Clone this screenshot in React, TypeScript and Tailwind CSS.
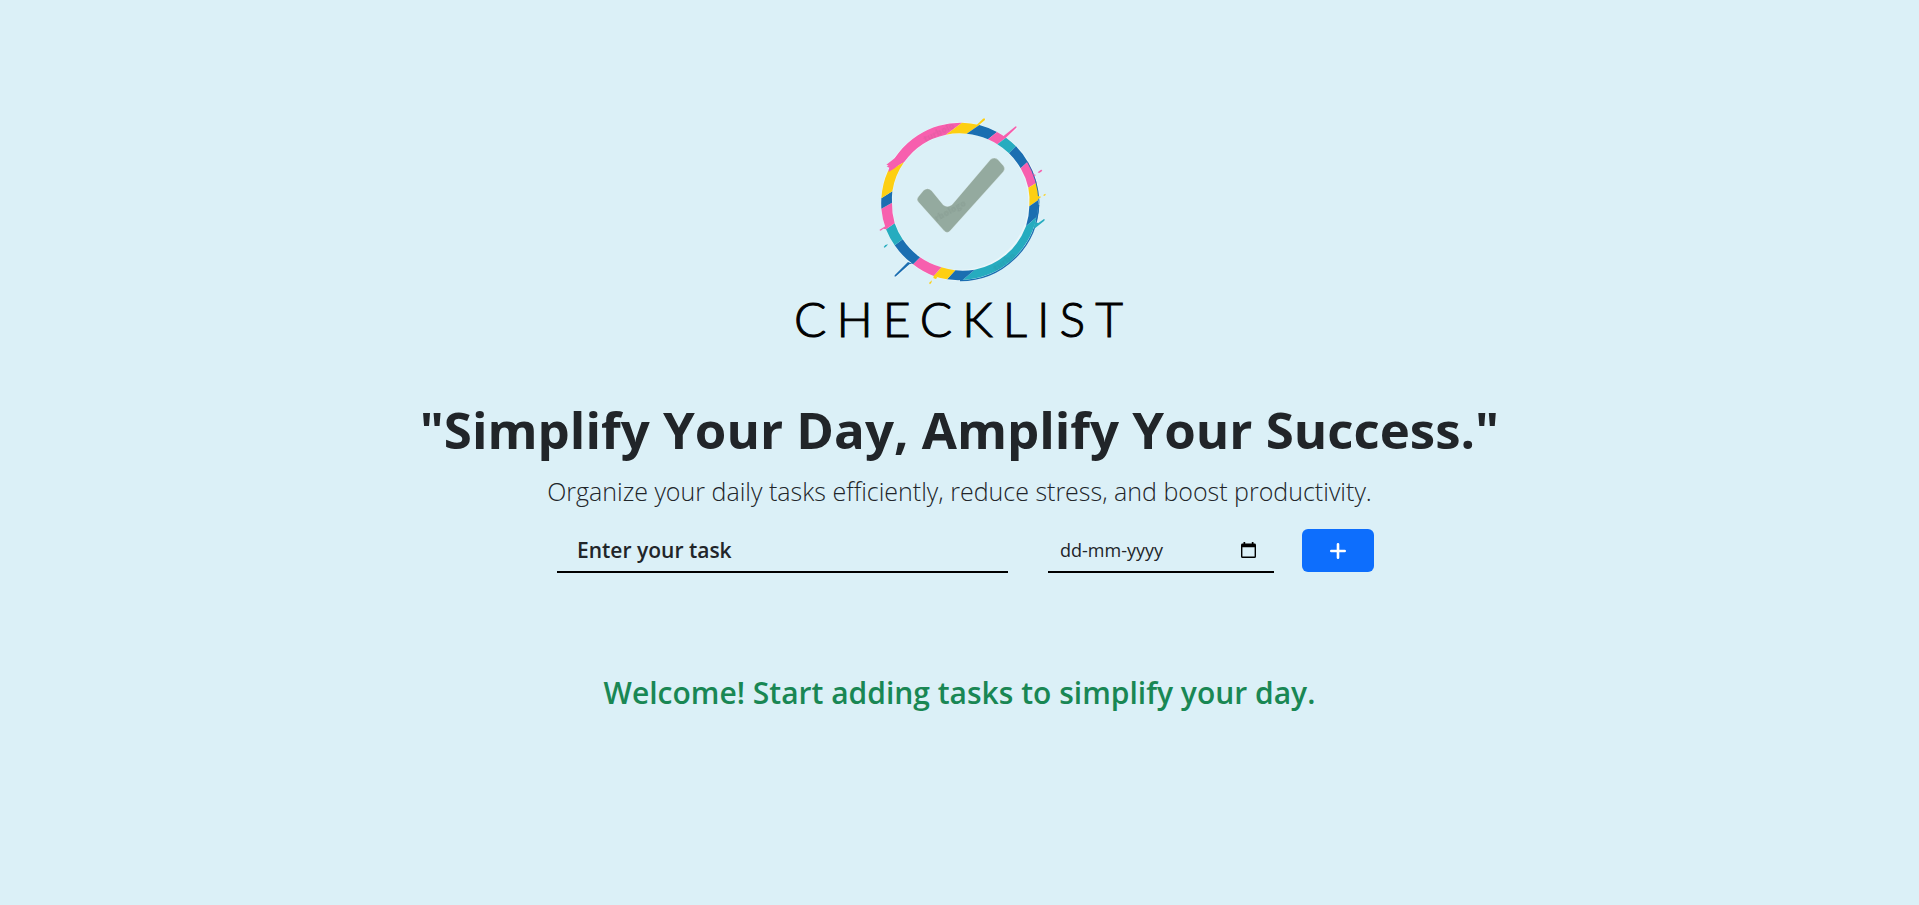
import { useState } from "react";

type Point = [number, number];
type Band = { color: string; outer: Point; inner: Point };

const PINK = "#f75fae";
const YELLOW = "#fdcf12";
const BLUE = "#1b6eb1";
const TEAL = "#26acbf";
const HALO = "#e9f6fa";

// Each band starts at its own edge and runs clockwise to the next band's edge.
const bands: Band[] = [
  { color: PINK, outer: [84, 198], inner: [132, 172] },
  { color: YELLOW, outer: [306, 53], inner: [258, 89] },
  { color: BLUE, outer: [358, 60], inner: [320, 86] },
  { color: PINK, outer: [411, 81], inner: [384, 103] },
  { color: TEAL, outer: [438, 98], inner: [412, 118] },
  { color: BLUE, outer: [468, 124], inner: [447, 145] },
  { color: PINK, outer: [503, 170], inner: [482, 190] },
  { color: YELLOW, outer: [530, 233], inner: [505, 248] },
  { color: BLUE, outer: [535, 285], inner: [508, 304] },
  { color: TEAL, outer: [530, 336], inner: [498, 364] },
  { color: BLUE, outer: [308, 525], inner: [344, 494] },
  { color: YELLOW, outer: [261, 523], inner: [286, 496] },
  { color: PINK, outer: [221, 513], inner: [244, 487] },
  { color: BLUE, outer: [159, 478], inner: [180, 457] },
  { color: TEAL, outer: [104, 421], inner: [128, 403] },
  { color: PINK, outer: [78, 373], inner: [104, 355] },
  { color: BLUE, outer: [64, 311], inner: [96, 293] },
  { color: YELLOW, outer: [64, 280], inner: [97, 259] },
];

const bandPath = (from: Band, to: Band) =>
  `M${from.outer} A237 237 0 0 1 ${to.outer} L${to.inner} A205 205 0 0 0 ${from.inner} Z`;

function Logo() {
  return (
    <svg viewBox="0 0 600 570" className="w-[200px]" aria-hidden="true">
      <circle cx="301" cy="290" r="221" fill="none" stroke={HALO} strokeWidth="34" />
      <path d="M536 300 A237 237 0 0 1 300 527" fill="none" stroke={BLUE} strokeWidth="4" />
      {bands.map((band, i) => (
        <path key={i} d={bandPath(band, bands[(i + 1) % bands.length])} fill={band.color} />
      ))}
      <path d="M86 201 L89 189 L80 184 L86 181 L79 179 L108 157 L130 128 L140 160 L104 190 Z" fill={PINK} />
      <path d="M502 170 Q534 225 537 290 Q535 325 529 345" fill="none" stroke={BLUE} strokeWidth="3" />
      <g stroke={HALO} strokeWidth="8" strokeLinecap="round">
        <path d="M362 54 L373 43" />
        <path d="M442 91 L468 68" />
        <path d="M142 483 L106 513" />
      </g>
      <g fill={YELLOW}>
        <path d="M346 64 L369 41 Q376 38 375 45 L357 60 Z" />
        <path d="M530 272 L543 275 L540 279 L530 284 Z" />
        <path d="M550 270 L556 266 L557 270 L552 273 Z" />
        <path d="M222 509 L232 518 L227 522 L220 519 Z" />
        <path d="M207 534 L216 526 L214 533 L210 538 Z" />
      </g>
      <g fill={PINK}>
        <path d="M428 95 L467 64 Q472 65 469 68 L436 100 Z" />
        <path d="M520 207 L528 210 L522 214 Z" />
        <path d="M533 202 L543 194 L547 195 L544 200 L537 204 Z" />
        <path d="M58 375 L77 363 L79 373 L70 371 L62 377 Z" />
      </g>
      <g fill={TEAL}>
        <path d="M524 352 L535 354 L552 342 Q556 343 553 347 L522 372 Z" />
        <path d="M71 426 L76 420 L84 418 L80 423 L74 428 Z" />
      </g>
      <path d="M144 471 L104 511 Q102 517 108 514 L149 477 L158 477 Z" fill={BLUE} />
      <path
        d="M175 275 L191 256 Q203 246 215 257 L250 300 Q262 309 276 299 L392 163 Q403 155 413 163 L431 183 Q437 192 430 200 L270 378 Q261 387 252 377 L175 291 Q168 283 175 275 Z"
        fill="#94aa9f"
        stroke={HALO}
        strokeWidth="1"
      />
      <g
        className="font-['Open_Sans',sans-serif] text-[26px] font-extrabold"
        fill="#3c4a48"
        opacity="0.08"
      >
        <text transform="translate(230 350) rotate(-29)">rbologo</text>
        <text transform="translate(196 112) rotate(-26)">turbolo</text>
        <text transform="translate(408 500) rotate(-36)">turbo</text>
      </g>
    </svg>
  );
}

function CalendarIcon() {
  return (
    <svg viewBox="0 0 15 16" className="h-4 w-[15px]" aria-hidden="true">
      <path
        d="M2.5 0h1.7v1.6h6.6V0h1.7v1.6h.9Q15 1.6 15 3v11.5Q15 16 13.4 16H1.6Q0 16 0 14.5V3Q0 1.6 1.6 1.6h.9zM1.4 5.2v9.3h12.2V5.2z"
        fill="#000"
        fillRule="evenodd"
      />
    </svg>
  );
}

export default function App() {
  const [task, setTask] = useState("");
  const [date, setDate] = useState("");

  return (
    <main className="flex min-h-screen flex-col items-center bg-[#dbf0f7] px-4 pt-[105px] font-['Open_Sans','Noto_Sans',sans-serif] text-[#212529]">
      <Logo />
      <p className="-mt-1 pl-2 font-['Lato',sans-serif] text-5xl leading-14 font-light tracking-[10px] text-black [-webkit-text-stroke:1px_#000]">
        CHECKLIST
      </p>
      <h1 className="mt-12 text-center text-[51px] leading-[68px] font-bold">
        "Simplify Your Day, Amplify Your Success."
      </h1>
      <p className="mt-2 text-center text-[25px] leading-10 font-light">
        Organize your daily tasks efficiently, reduce stress, and boost productivity.
      </p>
      <form
        className="mt-[18px] flex w-full max-w-[829px] items-start pl-3"
        onSubmit={(event) => event.preventDefault()}
      >
        <input
          type="text"
          aria-label="Task"
          placeholder="Enter your task"
          value={task}
          onChange={(event) => setTask(event.target.value)}
          className="mr-10 h-11 min-w-0 flex-1 border-b-2 border-black px-5 text-[21px] font-semibold outline-none placeholder:text-[#212529]"
        />
        <div className="mr-7 flex h-11 w-[226px] items-center border-b-2 border-black pr-[18px] pl-3">
          <input
            type="text"
            aria-label="Due date"
            placeholder="dd-mm-yyyy"
            value={date}
            onChange={(event) => setDate(event.target.value)}
            className="min-w-0 flex-1 text-lg outline-none placeholder:text-[#212529]"
          />
          <button type="button" aria-label="Pick a date">
            <CalendarIcon />
          </button>
        </div>
        <button
          type="submit"
          aria-label="Add task"
          className="flex h-[43px] w-[72px] items-center justify-center rounded-md bg-[#0d6efd] text-white"
        >
          <svg viewBox="0 0 16 16" className="size-4" aria-hidden="true">
            <path d="M8 1.3v13.4M1.3 8h13.4" stroke="currentColor" strokeWidth="2.6" strokeLinecap="round" />
          </svg>
        </button>
      </form>
      <h2 className="mt-24 text-center text-3xl leading-12 font-semibold text-[#198754]">
        Welcome! Start adding tasks to simplify your day.
      </h2>
    </main>
  );
}
